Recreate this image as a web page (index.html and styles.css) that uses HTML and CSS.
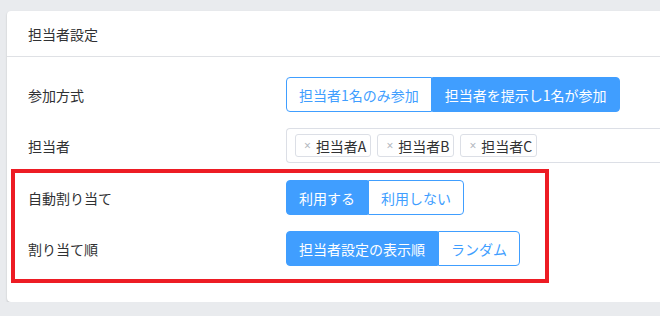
FILE: index.html
```html
<!DOCTYPE html>
<html lang="ja">
<head>
  <meta charset="UTF-8" />
  <title>担当者設定</title>
  <link rel="stylesheet" href="styles.css">
</head>
<body>
  <div class="card">
    <div class="card-header">担当者設定</div>
    <div class="card-body">
      <div class="row">
        <div class="label">参加方式</div>
        <div class="btn-group">
          <span class="btn">担当者1名のみ参加</span>
          <span class="btn active">担当者を提示し1名が参加</span>
        </div>
      </div>

      <div class="row">
        <div class="label">担当者</div>
        <div class="tag-input">
          <span class="tag"><span class="tag-close">×</span>担当者A</span>
          <span class="tag"><span class="tag-close">×</span>担当者B</span>
          <span class="tag"><span class="tag-close">×</span>担当者C</span>
        </div>
      </div>

      <!-- 注目枠 -->
      <div class="highlight">
        <div class="row">
          <div class="label">自動割り当て</div>
          <div class="btn-group">
            <span class="btn active">利用する</span>
            <span class="btn">利用しない</span>
          </div>
        </div>
        <div class="row">
          <div class="label">割り当て順</div>
          <div class="btn-group">
            <span class="btn active">担当者設定の表示順</span>
            <span class="btn">ランダム</span>
          </div>
        </div>
      </div>
    </div>
  </div>
</body>
</html>
```
FILE: styles.css
```css
:root {
  --primary: #409eff;
  --text: #303133;
  --border: #dcdfe6;
  --bg: #e9ebee;
  --font-main: "Noto Sans CJK JP", "Noto Sans", sans-serif;
}

* {
  margin: 0;
  padding: 0;
  box-sizing: border-box;
}

body {
  font-family: var(--font-main);
  font-size: 14px;
  color: var(--text);
  background-color: var(--bg);
  padding-top: 11px;
  overflow: hidden;
}

/* カードは右端で切れて見える */
.card {
  margin-left: 7px;
  background: white;
  border-radius: 4px 0 0 4px;
  box-shadow: 0 1px 2px rgba(0, 0, 0, 0.2);
}

.card-header {
  height: 46px;
  padding: 0 21px;
  display: flex;
  align-items: center;
  border-bottom: 1px solid #dfe1e5;
}

.card-body {
  padding: 20px 0 19px 21px;
}

.row {
  display: flex;
  align-items: center;
  min-height: 35px;
}

.row + .row {
  margin-top: 16px;
}

.label {
  width: 258px;
  flex: 0 0 auto;
}

.btn-group {
  display: flex;
}

.btn {
  height: 35px;
  padding: 0 12px;
  display: flex;
  align-items: center;
  border: 1px solid var(--primary);
  color: var(--primary);
  background: white;
  white-space: nowrap;
}

.btn:first-child {
  border-radius: 4px 0 0 4px;
}

.btn:last-child {
  border-radius: 0 4px 4px 0;
}

.btn.active {
  background: var(--primary);
  color: white;
}

.tag-input {
  flex: 1;
  height: 35px;
  padding: 0 8px;
  display: flex;
  align-items: center;
  gap: 6px;
  border: 1px solid var(--border);
  border-right: none;
  border-radius: 4px 0 0 4px;
}

.tag {
  height: 23px;
  padding: 0 4px 0 8px;
  display: flex;
  align-items: center;
  border: 1px solid var(--border);
  border-radius: 3px;
  background: white;
}

.tag-close {
  font-family: "Noto Sans", sans-serif;
  color: #b4b8c0;
  font-size: 12px;
  margin-right: 5px;
}

.highlight {
  width: 538px;
  margin: 6px 0 0 -17px;
  padding: 7px 0 13px 13px;
  border: 4px solid #ed1c24;
}
```
